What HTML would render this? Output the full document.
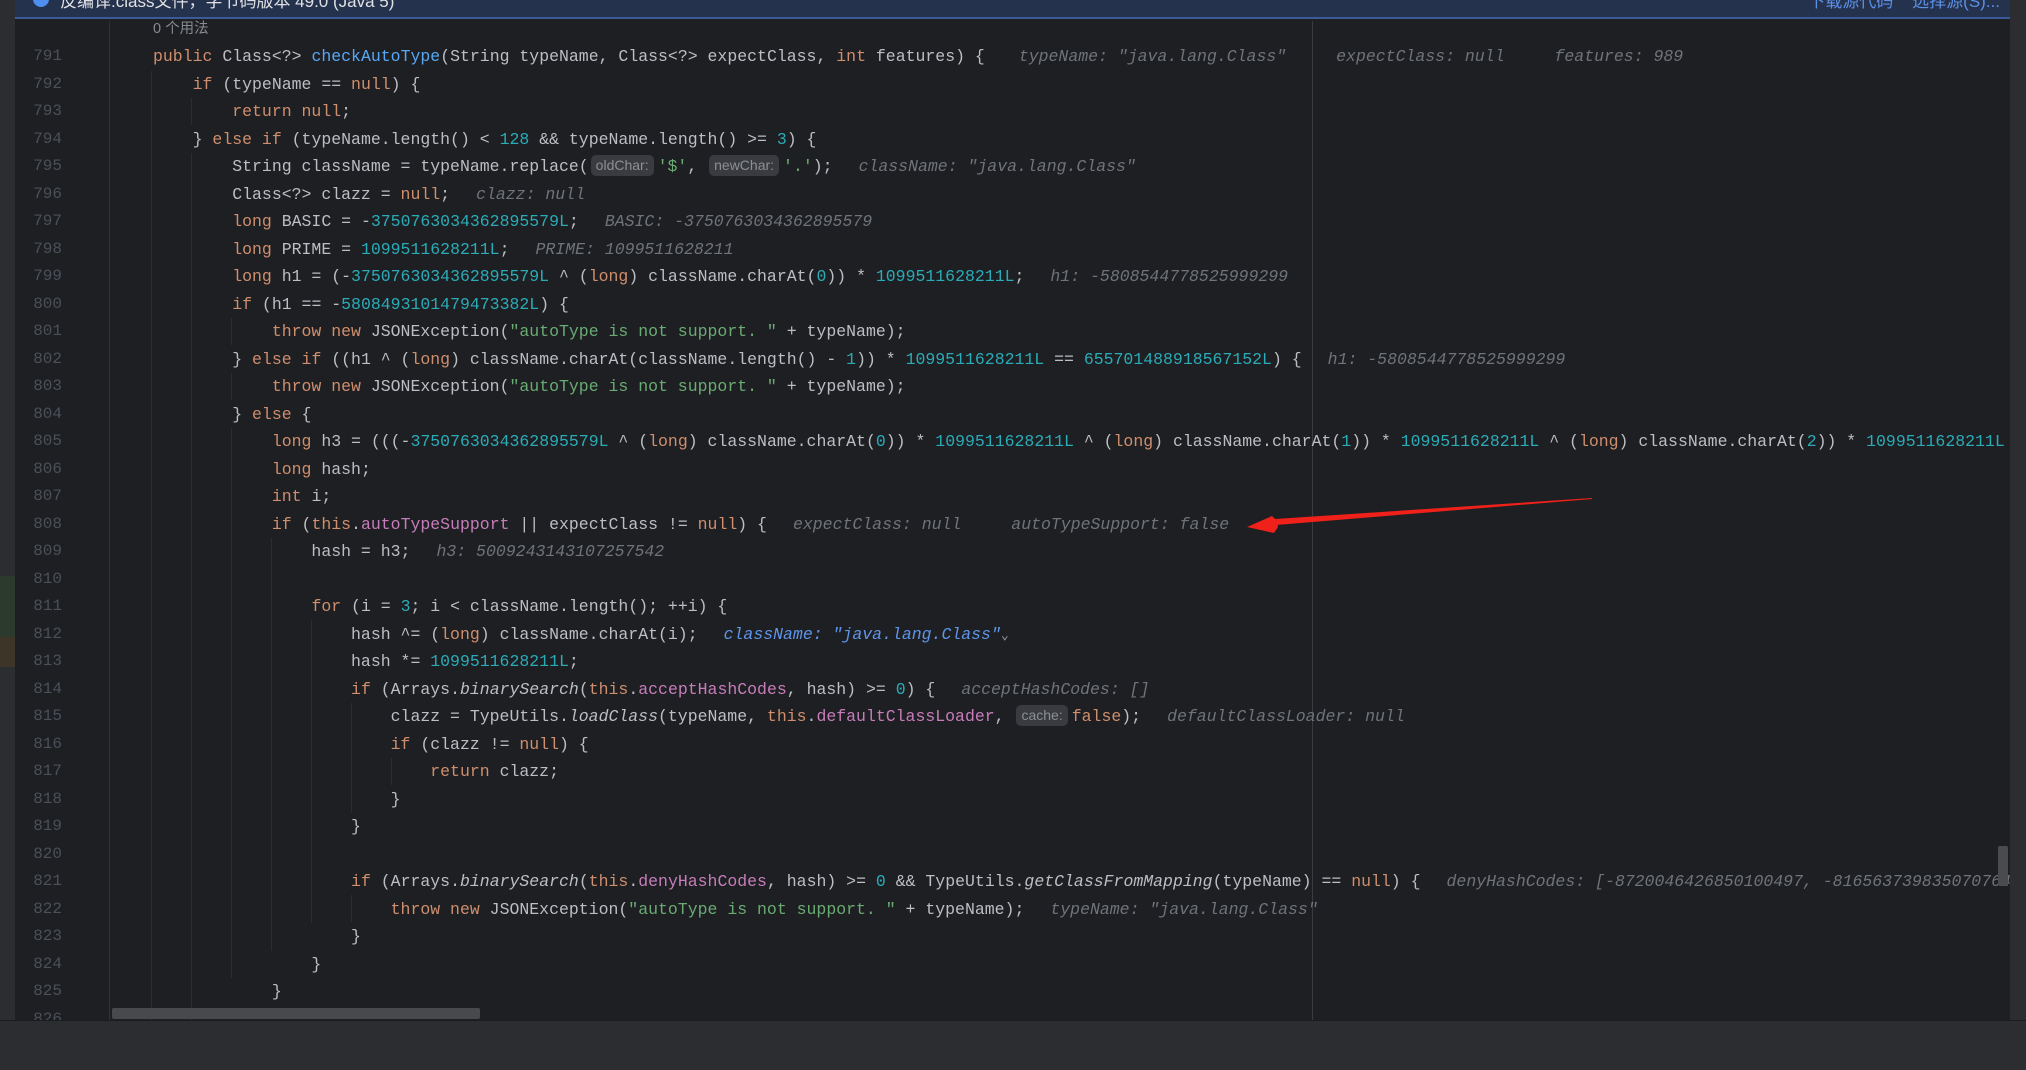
<!DOCTYPE html>
<html><head><meta charset="utf-8"><style>
*{margin:0;padding:0;box-sizing:border-box}
body{width:2026px;height:1070px;overflow:hidden;background:#1e1f22;position:relative;font-family:"Liberation Mono",monospace;}
#top{position:absolute;left:15px;top:0;width:1995px;height:19px;background:#25324d;border-bottom:2px solid #3b5a98;overflow:hidden}
#top .t{position:absolute;top:-13px;left:45px;font:17px "Liberation Sans","Noto Sans CJK SC",sans-serif;color:#dfe1e5}
#top .r{position:absolute;top:-13px;right:10px;font:17px "Liberation Sans","Noto Sans CJK SC",sans-serif;color:#5c8fe6}
#top .dot{position:absolute;left:18px;top:-9px;width:16px;height:16px;border-radius:50%;background:#4d8ef0}
#lstrip{position:absolute;left:0;top:0;width:15px;height:1020px;background:#2b2d30}
#rstrip{position:absolute;left:2010px;top:0;width:16px;height:1070px;background:#2b2d30}
#bottom{position:absolute;left:0;top:1020px;width:2026px;height:50px;background:#2b2d30;border-top:1px solid #1b1c1e}
.gl{position:absolute;width:1px;background:#2b2d31}
.l{position:absolute;left:0;height:27.5px;line-height:27.5px;width:2010px;white-space:pre;font-size:16.5px;color:#bcbec4}
.ln{position:absolute;left:20px;width:42px;text-align:right;color:#4b5059;font-size:16px}
.c{position:absolute;left:153px}
.k{color:#cf8e6d}.n{color:#2aacb8}.s{color:#6aab73}.f{color:#c77dbb}.m{color:#56a8f5}.i{font-style:italic}
.h{font-style:italic;color:#6f737a;margin-left:26px}
.h2{margin-left:50px}
.hb{font-style:italic;color:#5f95e8;margin-left:26px}
.p{display:inline-block;font:14px "Liberation Sans",sans-serif;color:#8c8f94;background:#393b40;border-radius:5px;padding:0 5px;line-height:21px;margin:0 4px 0 2px;vertical-align:1px}
</style></head><body>
<div id="lstrip"></div>
<div style="position:absolute;left:0;top:576px;width:15px;height:61px;background:#2b3a2c"></div>
<div style="position:absolute;left:0;top:637px;width:15px;height:30px;background:#3d3527"></div>
<div id="top"><div class="dot"></div><div class="t">反编译.class文件，字节码版本 49.0 (Java 5)</div><div class="r">下载源代码&nbsp;&nbsp;&nbsp;&nbsp;选择源(S)...</div></div>
<div style="position:absolute;left:109px;top:21px;width:1px;height:999px;background:#313337"></div>
<div style="position:absolute;left:1312px;top:21px;width:1px;height:999px;background:#393b40"></div>
<div class="gl" style="left:151px;top:71px;height:949px"></div>
<div class="gl" style="left:191px;top:98px;height:27px"></div>
<div class="gl" style="left:191px;top:153px;height:867px"></div>
<div class="gl" style="left:231px;top:318px;height:27px"></div>
<div class="gl" style="left:231px;top:373px;height:27px"></div>
<div class="gl" style="left:231px;top:428px;height:550px"></div>
<div class="gl" style="left:271px;top:538px;height:413px"></div>
<div class="gl" style="left:311px;top:620px;height:303px"></div>
<div class="gl" style="left:351px;top:703px;height:110px"></div>
<div class="gl" style="left:351px;top:895px;height:27px"></div>
<div class="gl" style="left:391px;top:758px;height:27px"></div>

<div class="l" style="top:15.75px"><span class="c" style="font:14.5px 'Liberation Sans','Noto Sans CJK SC',sans-serif;color:#868a91;line-height:27.5px">0 个用法</span></div>
<div class="l" style="top:43.25px"><span class="ln">791</span><span class="c"><span class="k">public</span> Class&lt;?&gt; <span class="m">checkAutoType</span>(String typeName, Class&lt;?&gt; expectClass, <span class="k">int</span> features) {<span class="h" style="margin-left:34px">typeName: "java.lang.Class"</span><span class="h h2">expectClass: null</span><span class="h h2">features: 989</span></span></div>
<div class="l" style="top:70.75px"><span class="ln">792</span><span class="c">    <span class="k">if</span> (typeName == <span class="k">null</span>) {</span></div>
<div class="l" style="top:98.25px"><span class="ln">793</span><span class="c">        <span class="k">return null</span>;</span></div>
<div class="l" style="top:125.75px"><span class="ln">794</span><span class="c">    } <span class="k">else if</span> (typeName.length() &lt; <span class="n">128</span> &amp;&amp; typeName.length() &gt;= <span class="n">3</span>) {</span></div>
<div class="l" style="top:153.25px"><span class="ln">795</span><span class="c">        String className = typeName.replace(<span class="p">oldChar:</span><span class="s">'$'</span>, <span class="p">newChar:</span><span class="s">'.'</span>);<span class="h">className: "java.lang.Class"</span></span></div>
<div class="l" style="top:180.75px"><span class="ln">796</span><span class="c">        Class&lt;?&gt; clazz = <span class="k">null</span>;<span class="h">clazz: null</span></span></div>
<div class="l" style="top:208.25px"><span class="ln">797</span><span class="c">        <span class="k">long</span> BASIC = -<span class="n">3750763034362895579L</span>;<span class="h">BASIC: -3750763034362895579</span></span></div>
<div class="l" style="top:235.75px"><span class="ln">798</span><span class="c">        <span class="k">long</span> PRIME = <span class="n">1099511628211L</span>;<span class="h">PRIME: 1099511628211</span></span></div>
<div class="l" style="top:263.25px"><span class="ln">799</span><span class="c">        <span class="k">long</span> h1 = (-<span class="n">3750763034362895579L</span> ^ (<span class="k">long</span>) className.charAt(<span class="n">0</span>)) * <span class="n">1099511628211L</span>;<span class="h">h1: -5808544778525999299</span></span></div>
<div class="l" style="top:290.75px"><span class="ln">800</span><span class="c">        <span class="k">if</span> (h1 == -<span class="n">5808493101479473382L</span>) {</span></div>
<div class="l" style="top:318.25px"><span class="ln">801</span><span class="c">            <span class="k">throw new</span> JSONException(<span class="s">"autoType is not support. "</span> + typeName);</span></div>
<div class="l" style="top:345.75px"><span class="ln">802</span><span class="c">        } <span class="k">else if</span> ((h1 ^ (<span class="k">long</span>) className.charAt(className.length() - <span class="n">1</span>)) * <span class="n">1099511628211L</span> == <span class="n">655701488918567152L</span>) {<span class="h">h1: -5808544778525999299</span></span></div>
<div class="l" style="top:373.25px"><span class="ln">803</span><span class="c">            <span class="k">throw new</span> JSONException(<span class="s">"autoType is not support. "</span> + typeName);</span></div>
<div class="l" style="top:400.75px"><span class="ln">804</span><span class="c">        } <span class="k">else</span> {</span></div>
<div class="l" style="top:428.25px"><span class="ln">805</span><span class="c">            <span class="k">long</span> h3 = (((-<span class="n">3750763034362895579L</span> ^ (<span class="k">long</span>) className.charAt(<span class="n">0</span>)) * <span class="n">1099511628211L</span> ^ (<span class="k">long</span>) className.charAt(<span class="n">1</span>)) * <span class="n">1099511628211L</span> ^ (<span class="k">long</span>) className.charAt(<span class="n">2</span>)) * <span class="n">1099511628211L</span></span></div>
<div class="l" style="top:455.75px"><span class="ln">806</span><span class="c">            <span class="k">long</span> hash;</span></div>
<div class="l" style="top:483.25px"><span class="ln">807</span><span class="c">            <span class="k">int</span> i;</span></div>
<div class="l" style="top:510.75px"><span class="ln">808</span><span class="c">            <span class="k">if</span> (<span class="k">this</span>.<span class="f">autoTypeSupport</span> || expectClass != <span class="k">null</span>) {<span class="h">expectClass: null</span><span class="h h2">autoTypeSupport: false</span></span></div>
<div class="l" style="top:538.25px"><span class="ln">809</span><span class="c">                hash = h3;<span class="h">h3: 5009243143107257542</span></span></div>
<div class="l" style="top:565.75px"><span class="ln">810</span></div>
<div class="l" style="top:593.25px"><span class="ln">811</span><span class="c">                <span class="k">for</span> (i = <span class="n">3</span>; i &lt; className.length(); ++i) {</span></div>
<div class="l" style="top:620.75px"><span class="ln">812</span><span class="c">                    hash ^= (<span class="k">long</span>) className.charAt(i);<span class="hb">className: "java.lang.Class"</span><span style="color:#9a9da3;font-size:13px">&#8964;</span></span></div>
<div class="l" style="top:648.25px"><span class="ln">813</span><span class="c">                    hash *= <span class="n">1099511628211L</span>;</span></div>
<div class="l" style="top:675.75px"><span class="ln">814</span><span class="c">                    <span class="k">if</span> (Arrays.<span class="i">binarySearch</span>(<span class="k">this</span>.<span class="f">acceptHashCodes</span>, hash) &gt;= <span class="n">0</span>) {<span class="h">acceptHashCodes: []</span></span></div>
<div class="l" style="top:703.25px"><span class="ln">815</span><span class="c">                        clazz = TypeUtils.<span class="i">loadClass</span>(typeName, <span class="k">this</span>.<span class="f">defaultClassLoader</span>, <span class="p">cache:</span><span class="k">false</span>);<span class="h">defaultClassLoader: null</span></span></div>
<div class="l" style="top:730.75px"><span class="ln">816</span><span class="c">                        <span class="k">if</span> (clazz != <span class="k">null</span>) {</span></div>
<div class="l" style="top:758.25px"><span class="ln">817</span><span class="c">                            <span class="k">return</span> clazz;</span></div>
<div class="l" style="top:785.75px"><span class="ln">818</span><span class="c">                        }</span></div>
<div class="l" style="top:813.25px"><span class="ln">819</span><span class="c">                    }</span></div>
<div class="l" style="top:840.75px"><span class="ln">820</span></div>
<div class="l" style="top:868.25px"><span class="ln">821</span><span class="c">                    <span class="k">if</span> (Arrays.<span class="i">binarySearch</span>(<span class="k">this</span>.<span class="f">denyHashCodes</span>, hash) &gt;= <span class="n">0</span> &amp;&amp; TypeUtils.<span class="i">getClassFromMapping</span>(typeName) == <span class="k">null</span>) {<span class="h">denyHashCodes: [-8720046426850100497, -8165637398350707645</span></span></div>
<div class="l" style="top:895.75px"><span class="ln">822</span><span class="c">                        <span class="k">throw new</span> JSONException(<span class="s">"autoType is not support. "</span> + typeName);<span class="h">typeName: "java.lang.Class"</span></span></div>
<div class="l" style="top:923.25px"><span class="ln">823</span><span class="c">                    }</span></div>
<div class="l" style="top:950.75px"><span class="ln">824</span><span class="c">                }</span></div>
<div class="l" style="top:978.25px"><span class="ln">825</span><span class="c">            }</span></div>
<div class="l" style="top:1005.75px;height:14px;overflow:hidden"><span class="ln">826</span></div>
<div style="position:absolute;left:112px;top:1008px;width:368px;height:11px;background:#48494c;border-radius:2px"></div>
<div style="position:absolute;left:1998px;top:846px;width:10px;height:40px;background:#4a4b4e;border-radius:2px"></div>
<div id="rstrip"></div>
<div id="bottom"></div>
<svg style="position:absolute;left:0;top:0" width="2026" height="1070">
<polygon points="1592,498 1275,519 1276,525 1592,499" fill="#f0201a"/>
<polygon points="1247,527 1272,516 1277,521 1278,527 1274,533" fill="#f0201a"/>
</svg>
</body></html>
